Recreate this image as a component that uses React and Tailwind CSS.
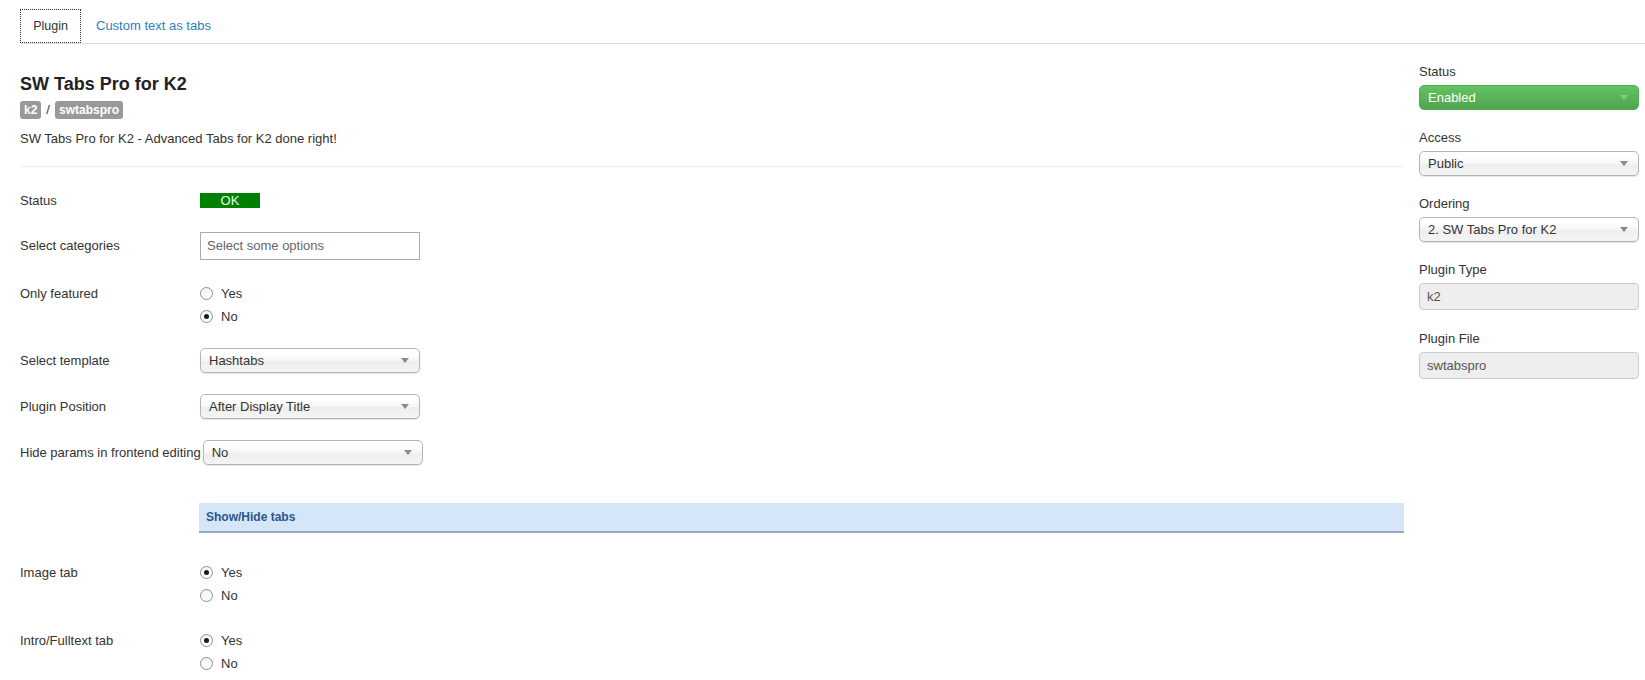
const Radio = ({ checked }) => (
  <span className="w-[13px] h-[13px] rounded-full border border-[#8e8e8e] bg-gradient-to-b from-[#f4f4f4] to-white flex items-center justify-center shrink-0">
    {checked && <span className="w-[5px] h-[5px] rounded-full bg-[#1a1a1a]" />}
  </span>
);

const RadioGroup = ({ value }) => (
  <div className="flex flex-col">
    {['Yes', 'No'].map((opt) => (
      <div key={opt} className="h-[23px] flex items-center gap-[8px]">
        <Radio checked={value === opt} />
        <span>{opt}</span>
      </div>
    ))}
  </div>
);

const Arrow = ({ color = '#8a8a8a' }) => (
  <svg width="8" height="5" viewBox="0 0 8 5">
    <path d="M0 0 L8 0 L4 5 Z" fill={color} />
  </svg>
);

const Select = ({ value }) => (
  <div className="w-[220px] h-[25px] rounded-[5px] border border-[#b4b4b4] bg-[linear-gradient(#ffffff_20%,#f6f6f6_50%,#eeeeee_52%,#f4f4f4_100%)] shadow-[0_1px_1px_rgba(0,0,0,0.1)] flex items-center justify-between pl-[8px] pr-[10px]">
    <span>{value}</span>
    <Arrow />
  </div>
);

const Label = ({ children }) => (
  <div className="min-w-[180px] pr-[2px] whitespace-nowrap">{children}</div>
);

const Row = ({ label, className = '', align = 'items-center', children }) => (
  <div className={`flex ${align} ${className}`}>
    <Label>{label}</Label>
    {children}
  </div>
);

const SideField = ({ label, className = 'mt-[18px]', children }) => (
  <div className={className}>
    <div className="h-[18px] leading-[18px]">{label}</div>
    <div className="mt-[4px]">{children}</div>
  </div>
);

const ReadOnly = ({ value }) => (
  <div className="w-[220px] h-[27px] rounded-[4px] border border-[#cccccc] bg-[#eeeeee] text-[#555] flex items-center pl-[7px]">
    {value}
  </div>
);

export default function App() {
  return (
    <div className="w-[1645px] h-[680px] overflow-hidden bg-white text-[13px] text-[#333] font-['Liberation_Sans',Arial,sans-serif]">
      {/* tabs */}
      <div className="ml-[20px] pt-[9px] flex border-b border-[#dddddd] text-[12.5px]">
        <div className="w-[61px] h-[34px] border border-dotted border-[#333] flex items-center justify-center -mb-px bg-white">
          Plugin
        </div>
        <div className="h-[34px] flex items-center pl-[15px] text-[#2a82be] text-[13px]">Custom text as tabs</div>
      </div>

      <div className="flex pl-[20px] gap-[15px]">
        {/* main column */}
        <div className="w-[1384px]">
          <h3 className="mt-[30px] text-[18px] leading-[20px] font-bold text-[#222]">SW Tabs Pro for K2</h3>
          <div className="mt-[7px] flex items-center gap-[5px] h-[18px]">
            <span className="h-[18px] px-[4px] rounded-[3px] bg-[#999] text-white text-[12px] font-bold flex items-center">k2</span>
            <span>/</span>
            <span className="h-[18px] px-[4px] rounded-[3px] bg-[#999] text-white text-[12px] font-bold flex items-center">swtabspro</span>
          </div>
          <p className="mt-[11px] leading-[18px]">SW Tabs Pro for K2 - Advanced Tabs for K2 done right!</p>
          <div className="mt-[18px] border-t border-[#eeeeee]" />

          <Row label="Status" className="mt-[26px] leading-[15px]">
            <div className="w-[60px] h-[15px] bg-[#008000] text-[#e8ffe8] flex items-center justify-center">OK</div>
          </Row>

          <Row label="Select categories" className="mt-[24px]">
            <div className="w-[220px] h-[28px] border border-[#aaaaaa] bg-white text-[#666] flex items-center pl-[6px]">
              Select some options
            </div>
          </Row>

          <Row label={<div className="leading-[23px]">Only featured</div>} className="mt-[22px]" align="items-start">
            <RadioGroup value="No" />
          </Row>

          <Row label="Select template" className="mt-[20px]">
            <Select value="Hashtabs" />
          </Row>

          <Row label="Plugin Position" className="mt-[21px]">
            <Select value="After Display Title" />
          </Row>

          <Row label="Hide params in frontend editing" className="mt-[21px]">
            <Select value="No" />
          </Row>

          <div className="mt-[38px] ml-[179px] h-[30px] bg-[#d4e6f8] border-b-2 border-[#98a9bd] flex items-center pl-[7px] text-[12px] font-bold text-[#28578a]">
            Show/Hide tabs
          </div>

          <Row label={<div className="leading-[23px]">Image tab</div>} className="mt-[28px]" align="items-start">
            <RadioGroup value="Yes" />
          </Row>

          <Row label={<div className="leading-[23px]">Intro/Fulltext tab</div>} className="mt-[22px]" align="items-start">
            <RadioGroup value="Yes" />
          </Row>
        </div>

        {/* side column */}
        <div className="w-[220px]">
          <SideField label="Status" className="mt-[19px]">
            <div className="w-[220px] h-[25px] rounded-[5px] border border-[#4cae4c] bg-gradient-to-b from-[#62c462] to-[#51a351] text-white flex items-center justify-between pl-[8px] pr-[10px]">
              <span>Enabled</span>
              <Arrow color="#7fcf7f" />
            </div>
          </SideField>
          <SideField label="Access" className="mt-[19px]">
            <Select value="Public" />
          </SideField>
          <SideField label="Ordering" className="mt-[19px]">
            <Select value="2. SW Tabs Pro for K2" />
          </SideField>
          <SideField label="Plugin Type" className="mt-[19px]">
            <ReadOnly value="k2" />
          </SideField>
          <SideField label="Plugin File" className="mt-[20px]">
            <ReadOnly value="swtabspro" />
          </SideField>
        </div>
      </div>
    </div>
  );
}
